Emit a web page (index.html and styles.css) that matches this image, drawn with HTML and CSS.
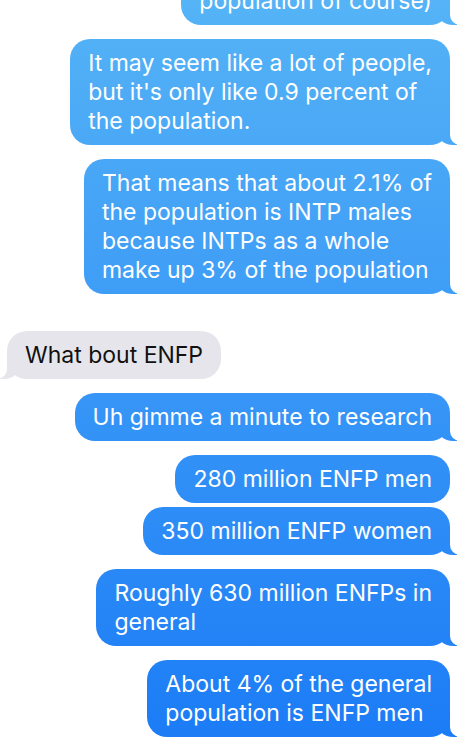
FILE: index.html
```html
<!DOCTYPE html>
<html lang="en">
<head>
  <meta charset="UTF-8">
  <meta name="viewport" content="width=device-width, initial-scale=1.0">
  <title>Messages</title>
  <link rel="stylesheet" href="styles.css">
</head>
<body>
  <!-- Conversation -->
  <div class="chat">
    <div class="bubble sent tail">population of course)</div>

    <div class="bubble sent tail">It may seem like a lot of people,<br>but it's only like 0.9 percent of<br>the population.</div>

    <div class="bubble sent tail">That means that about 2.1% of<br>the population is INTP males<br>because INTPs as a whole<br>make up 3% of the population</div>

    <div class="bubble received tail">What bout ENFP</div>

    <div class="bubble sent tail">Uh gimme a minute to research</div>

    <div class="bubble sent">280 million ENFP men</div>
    <div class="bubble sent tail grouped">350 million ENFP women</div>

    <div class="bubble sent tail">Roughly 630 million ENFPs in<br>general</div>

    <div class="bubble sent tail">About 4% of the general<br>population is ENFP men</div>
  </div>
</body>
</html>
```

FILE: styles.css
```css
body {
  margin: 0;
  background: #fff;
  font-family: Inter, "Noto Sans", sans-serif;
  overflow: hidden;
}

.chat {
  display: flex;
  flex-direction: column;
  margin-top: -37px;
  padding: 0 19px 0 7px;
}

.bubble {
  position: relative;
  font-size: 23px;
  line-height: 29px;
  padding: 10px 18px 9px 18px;
  border-radius: 20px;
  margin-top: 14px;
  white-space: nowrap;
}

.bubble.grouped {
  margin-top: 4px;
}

/* Sent messages: gradient fixed to the screen, like iMessage */
.sent {
  align-self: flex-end;
  color: #fff;
  background: linear-gradient(#55b3f6, #1b7bf6) fixed;
}

.received {
  align-self: flex-start;
  color: #111;
  background: #e6e5eb;
  margin-top: 37px;
}

/* Tails */
.tail::before,
.tail::after {
  content: "";
  position: absolute;
  bottom: 0;
  height: 22px;
}

.sent.tail::before {
  right: -7px;
  width: 20px;
  background: linear-gradient(#55b3f6, #1b7bf6) fixed;
  border-bottom-left-radius: 16px 14px;
}

.sent.tail::after {
  right: -26px;
  width: 26px;
  background: #fff;
  border-bottom-left-radius: 10px;
}

.received.tail::before {
  left: -7px;
  width: 20px;
  background: #e6e5eb;
  border-bottom-right-radius: 16px 14px;
}

.received.tail::after {
  left: -26px;
  width: 26px;
  background: #fff;
  border-bottom-right-radius: 10px;
}
```
